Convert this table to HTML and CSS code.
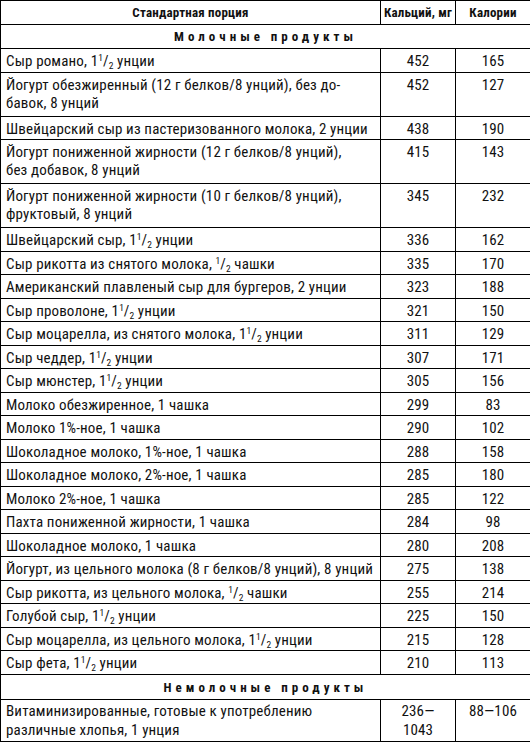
FILE: index.html
```html
<!DOCTYPE html>
<html lang="ru">
<head>
<meta charset="utf-8">
<title>Кальций</title>
<link rel="stylesheet" href="styles.css">
</head>
<body>
<table class="tbl">
<colgroup><col class="c-name"><col class="c-num"><col class="c-num2"></colgroup>
<thead>
<tr class="head"><th>Стандартная порция</th><th>Кальций, мг</th><th>Калории</th></tr>
</thead>
<tbody>
<tr class="sec"><td colspan="3">Молочные продукты</td></tr>
<tr><td>Сыр романо, 1<sup>1</sup>/<sub>2</sub> унции</td><td>452</td><td>165</td></tr>
<tr class="two"><td>Йогурт обезжиренный (12 г белков/8 унций), без до-<br>бавок, 8 унций</td><td>452</td><td>127</td></tr>
<tr><td>Швейцарский сыр из пастеризованного молока, 2 унции</td><td>438</td><td>190</td></tr>
<tr class="two"><td>Йогурт пониженной жирности (12 г белков/8 унций),<br>без добавок, 8 унций</td><td>415</td><td>143</td></tr>
<tr class="two"><td>Йогурт пониженной жирности (10 г белков/8 унций),<br>фруктовый, 8 унций</td><td>345</td><td>232</td></tr>
<tr><td>Швейцарский сыр, 1<sup>1</sup>/<sub>2</sub> унции</td><td>336</td><td>162</td></tr>
<tr><td>Сыр рикотта из снятого молока, <sup>1</sup>/<sub>2</sub> чашки</td><td>335</td><td>170</td></tr>
<tr><td>Американский плавленый сыр для бургеров, 2 унции</td><td>323</td><td>188</td></tr>
<tr><td>Сыр проволоне, 1<sup>1</sup>/<sub>2</sub> унции</td><td>321</td><td>150</td></tr>
<tr><td>Сыр моцарелла, из снятого молока, 1<sup>1</sup>/<sub>2</sub> унции</td><td>311</td><td>129</td></tr>
<tr><td>Сыр чеддер, 1<sup>1</sup>/<sub>2</sub> унции</td><td>307</td><td>171</td></tr>
<tr><td>Сыр мюнстер, 1<sup>1</sup>/<sub>2</sub> унции</td><td>305</td><td>156</td></tr>
<tr><td>Молоко обезжиренное, 1 чашка</td><td>299</td><td>83</td></tr>
<tr><td>Молоко 1%-ное, 1 чашка</td><td>290</td><td>102</td></tr>
<tr><td>Шоколадное молоко, 1%-ное, 1 чашка</td><td>288</td><td>158</td></tr>
<tr><td>Шоколадное молоко, 2%-ное, 1 чашка</td><td>285</td><td>180</td></tr>
<tr><td>Молоко 2%-ное, 1 чашка</td><td>285</td><td>122</td></tr>
<tr><td>Пахта пониженной жирности, 1 чашка</td><td>284</td><td>98</td></tr>
<tr><td>Шоколадное молоко, 1 чашка</td><td>280</td><td>208</td></tr>
<tr><td>Йогурт, из цельного молока (8 г белков/8 унций), 8 унций</td><td>275</td><td>138</td></tr>
<tr><td>Сыр рикотта, из цельного молока, <sup>1</sup>/<sub>2</sub> чашки</td><td>255</td><td>214</td></tr>
<tr><td>Голубой сыр, 1<sup>1</sup>/<sub>2</sub> унции</td><td>225</td><td>150</td></tr>
<tr><td>Сыр моцарелла, из цельного молока, 1<sup>1</sup>/<sub>2</sub> унции</td><td>215</td><td>128</td></tr>
<tr><td>Сыр фета, 1<sup>1</sup>/<sub>2</sub> унции</td><td>210</td><td>113</td></tr>
<tr class="sec sec2"><td colspan="3">Немолочные продукты</td></tr>
<tr class="last"><td>Витаминизированные, готовые к употреблению<br>различные хлопья, 1 унция</td><td>236—<br>1043</td><td>88—106</td></tr>
</tbody>
</table>
</body>
</html>
```
FILE: styles.css
```css
html, body {
  margin: 0;
  padding: 0;
  background: #fff;
}
.tbl {
  border-collapse: collapse;
  width: 530px;
  table-layout: fixed;
  font-family: "Roboto Condensed", "DejaVu Sans Condensed", sans-serif;
  font-size: 15px;
  color: #111;
  letter-spacing: 0.15px;
}
.c-name { width: 380px; }
.c-num { width: 75px; }
.c-num2 { width: 75px; }
.tbl th,
.tbl td {
  border: 1px solid #000;
  padding: 3px 5px 1.5px;
  line-height: 18px;
  vertical-align: top;
  text-align: center;
  white-space: nowrap;
}
.tbl td:first-child {
  text-align: left;
  padding-right: 0;
}
.head th {
  font-weight: bold;
  font-size: 13px;
  line-height: 23px;
  letter-spacing: 0.2px;
  padding: 0 2px;
}
.tbl .sec td {
  text-align: center;
  font-weight: bold;
  font-size: 13px;
  letter-spacing: 4px;
  line-height: 19px;
  padding: 2px 5px 2px;
}
.tbl .sec2 td {
  line-height: 20px;
  padding: 3px 5px 1.5px;
}
.tbl .two td {
  padding-bottom: 4px;
}
.tbl .last td {
  line-height: 19px;
  padding: 2px 5px 1px;
}
.tbl sup,
.tbl sub {
  font-size: 9.5px;
  line-height: 0;
  letter-spacing: 0;
}
.tbl sup { vertical-align: 5px; }
.tbl sub { vertical-align: -3px; }
```
